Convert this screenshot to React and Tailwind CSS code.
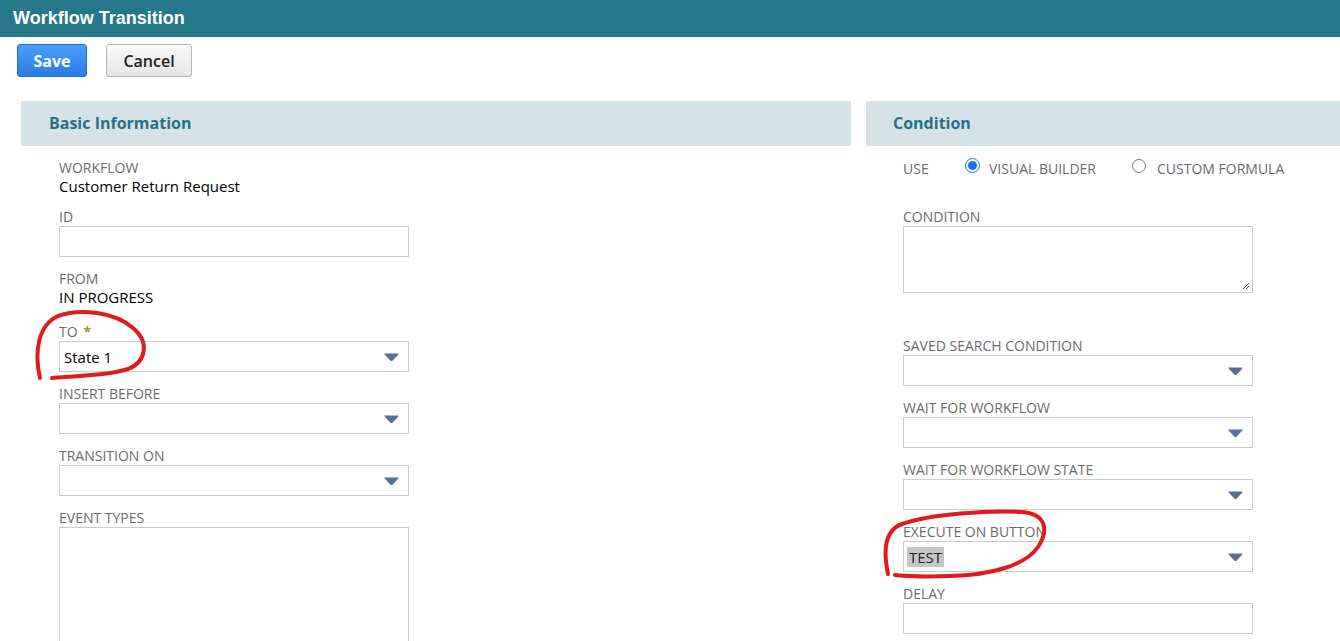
import React from "react";

const font = { fontFamily: '"Open Sans", "DejaVu Sans", sans-serif' };

function Arrow() {
  return (
    <svg width="15" height="8" viewBox="0 0 15 8" className="shrink-0">
      <path d="M1 1 L14 1 L8.3 7 Q7.5 7.8 6.7 7 Z" fill="#5d6f94" stroke="#5d6f94" strokeWidth="1.2" strokeLinejoin="round" />
    </svg>
  );
}

function Label({ children, star }) {
  return (
    <div className="text-[14px] leading-[18px] h-[18px] text-[#6b6b6b] uppercase whitespace-nowrap">
      {children}
      {star && <span className="text-[#b58a2a] ml-[6px] font-bold">*</span>}
    </div>
  );
}

function Select({ value, highlight }) {
  return (
    <div className="w-[350px] h-[31px] border border-[#cccccc] bg-white flex items-center justify-between pl-[3px] pr-[9px]">
      <span className="text-[15px] text-black leading-[20px]">
        {value ? (
          highlight ? (
            <span className="bg-[#c6c6c6] px-[2px] text-[#222] inline-block">{value}</span>
          ) : (
            <span className="pl-[1px]">{value}</span>
          )
        ) : null}
      </span>
      <Arrow />
    </div>
  );
}

function Input() {
  return <div className="w-[350px] h-[31px] border border-[#cccccc] bg-white" />;
}

function Field({ label, star, children, mt = "mt-[13px]" }) {
  return (
    <div className={mt}>
      <Label star={star}>{label}</Label>
      {children}
    </div>
  );
}

function Radio({ checked }) {
  return checked ? (
    <span className="block w-[15px] h-[15px] rounded-full border-[1.5px] border-[#1a73e8] bg-white p-[2px]">
      <span className="block w-full h-full rounded-full bg-[#1a73e8]" />
    </span>
  ) : (
    <span className="block w-[14px] h-[14px] rounded-full border border-[#767676] bg-white" />
  );
}

export default function App() {
  return (
    <div className="relative w-[1340px] h-[641px] overflow-hidden bg-white" style={font}>
      <div className="h-[37px] bg-[#27778a] flex items-center pl-[13px]">
        <span className="text-white font-bold text-[18px]" style={{ fontFamily: '"Liberation Sans", Arial, sans-serif' }}>
          Workflow Transition
        </span>
      </div>
      <div className="flex items-center gap-[19px] pl-[17px] pt-[7px]">
        <button className="w-[70px] h-[33px] rounded-[3px] border border-[#1f6fd6] bg-gradient-to-b from-[#4d9ef9] to-[#2c7be5] text-white font-bold text-[16px]">
          Save
        </button>
        <button className="w-[86px] h-[33px] rounded-[3px] border border-[#b5b5b5] bg-gradient-to-b from-[#fafafa] to-[#e5e5e5] text-[#222] font-semibold text-[16px]">
          Cancel
        </button>
      </div>
      <div className="flex gap-[15px] pl-[21px] mt-[24px]">
        <div className="w-[830px] shrink-0">
          <div className="h-[45px] bg-[#d5e3e9] flex items-center pl-[28px]">
            <span className="font-bold text-[16px] text-[#27708a] -mt-[2px]">Basic Information</span>
          </div>
          <div className="pl-[38px] pt-[13px]">
            <div>
              <Label>Workflow</Label>
              <div className="text-[15px] leading-[18px] text-black">Customer Return Request</div>
            </div>
            <Field label="ID">
              <Input />
            </Field>
            <div className="mt-[13px]">
              <Label>From</Label>
              <div className="text-[15px] leading-[18px] text-black">IN PROGRESS</div>
            </div>
            <Field label="To" star mt="mt-[17px]">
              <Select value="State 1" />
            </Field>
            <Field label="Insert Before">
              <Select />
            </Field>
            <Field label="Transition On">
              <Select />
            </Field>
            <Field label="Event Types">
              <div className="w-[350px] h-[130px] border border-[#cccccc]" />
            </Field>
          </div>
        </div>
        <div className="flex-1">
          <div className="h-[45px] bg-[#d5e3e9] flex items-center pl-[27px]">
            <span className="font-bold text-[16px] text-[#27708a] -mt-[2px]">Condition</span>
          </div>
          <div className="pl-[37px] pt-[13px]">
            <div className="flex items-center h-[18px] text-[14px] text-[#6b6b6b]">
              <span className="w-[62px]">USE</span>
              <span className="-mt-[5px]"><Radio checked /></span>
              <span className="ml-[9px] w-[143px]">VISUAL BUILDER</span>
              <span className="-mt-[5px]"><Radio /></span>
              <span className="ml-[11px]">CUSTOM FORMULA</span>
            </div>
            <Field label="Condition" mt="mt-[31px]">
              <div className="relative w-[350px] h-[67px] border border-[#cccccc]">
                <svg className="absolute right-[2px] bottom-[2px]" width="9" height="9" viewBox="0 0 9 9">
                  <path d="M8 2 L2 8 M8 5 L5 8" stroke="#555" strokeWidth="1" />
                </svg>
              </div>
            </Field>
            <Field label="Saved Search Condition" mt="mt-[44px]">
              <Select />
            </Field>
            <Field label="Wait For Workflow">
              <Select />
            </Field>
            <Field label="Wait For Workflow State">
              <Select />
            </Field>
            <Field label="Execute On Button">
              <Select value="TEST" highlight />
            </Field>
            <Field label="Delay">
              <Input />
            </Field>
          </div>
        </div>
      </div>

      <svg className="absolute left-0 top-0 pointer-events-none" width="1340" height="641" viewBox="0 0 1340 641">
        <path
          d="M40 378 C34 352 38 325 58 316 C80 308 115 312 133 328 C150 342 146 362 128 369 C110 375 80 376 52 378"
          fill="none" stroke="#e01b1b" strokeWidth="4" strokeLinecap="round" strokeLinejoin="round"
        />
        <path
          d="M888 574 C883 550 885 530 902 524 C930 514 990 510 1022 512 C1048 514 1048 532 1038 547 C1025 566 990 575 950 576 C925 577 905 576 895 575"
          fill="none" stroke="#e01b1b" strokeWidth="4" strokeLinecap="round" strokeLinejoin="round"
        />
      </svg>
    </div>
  );
}
